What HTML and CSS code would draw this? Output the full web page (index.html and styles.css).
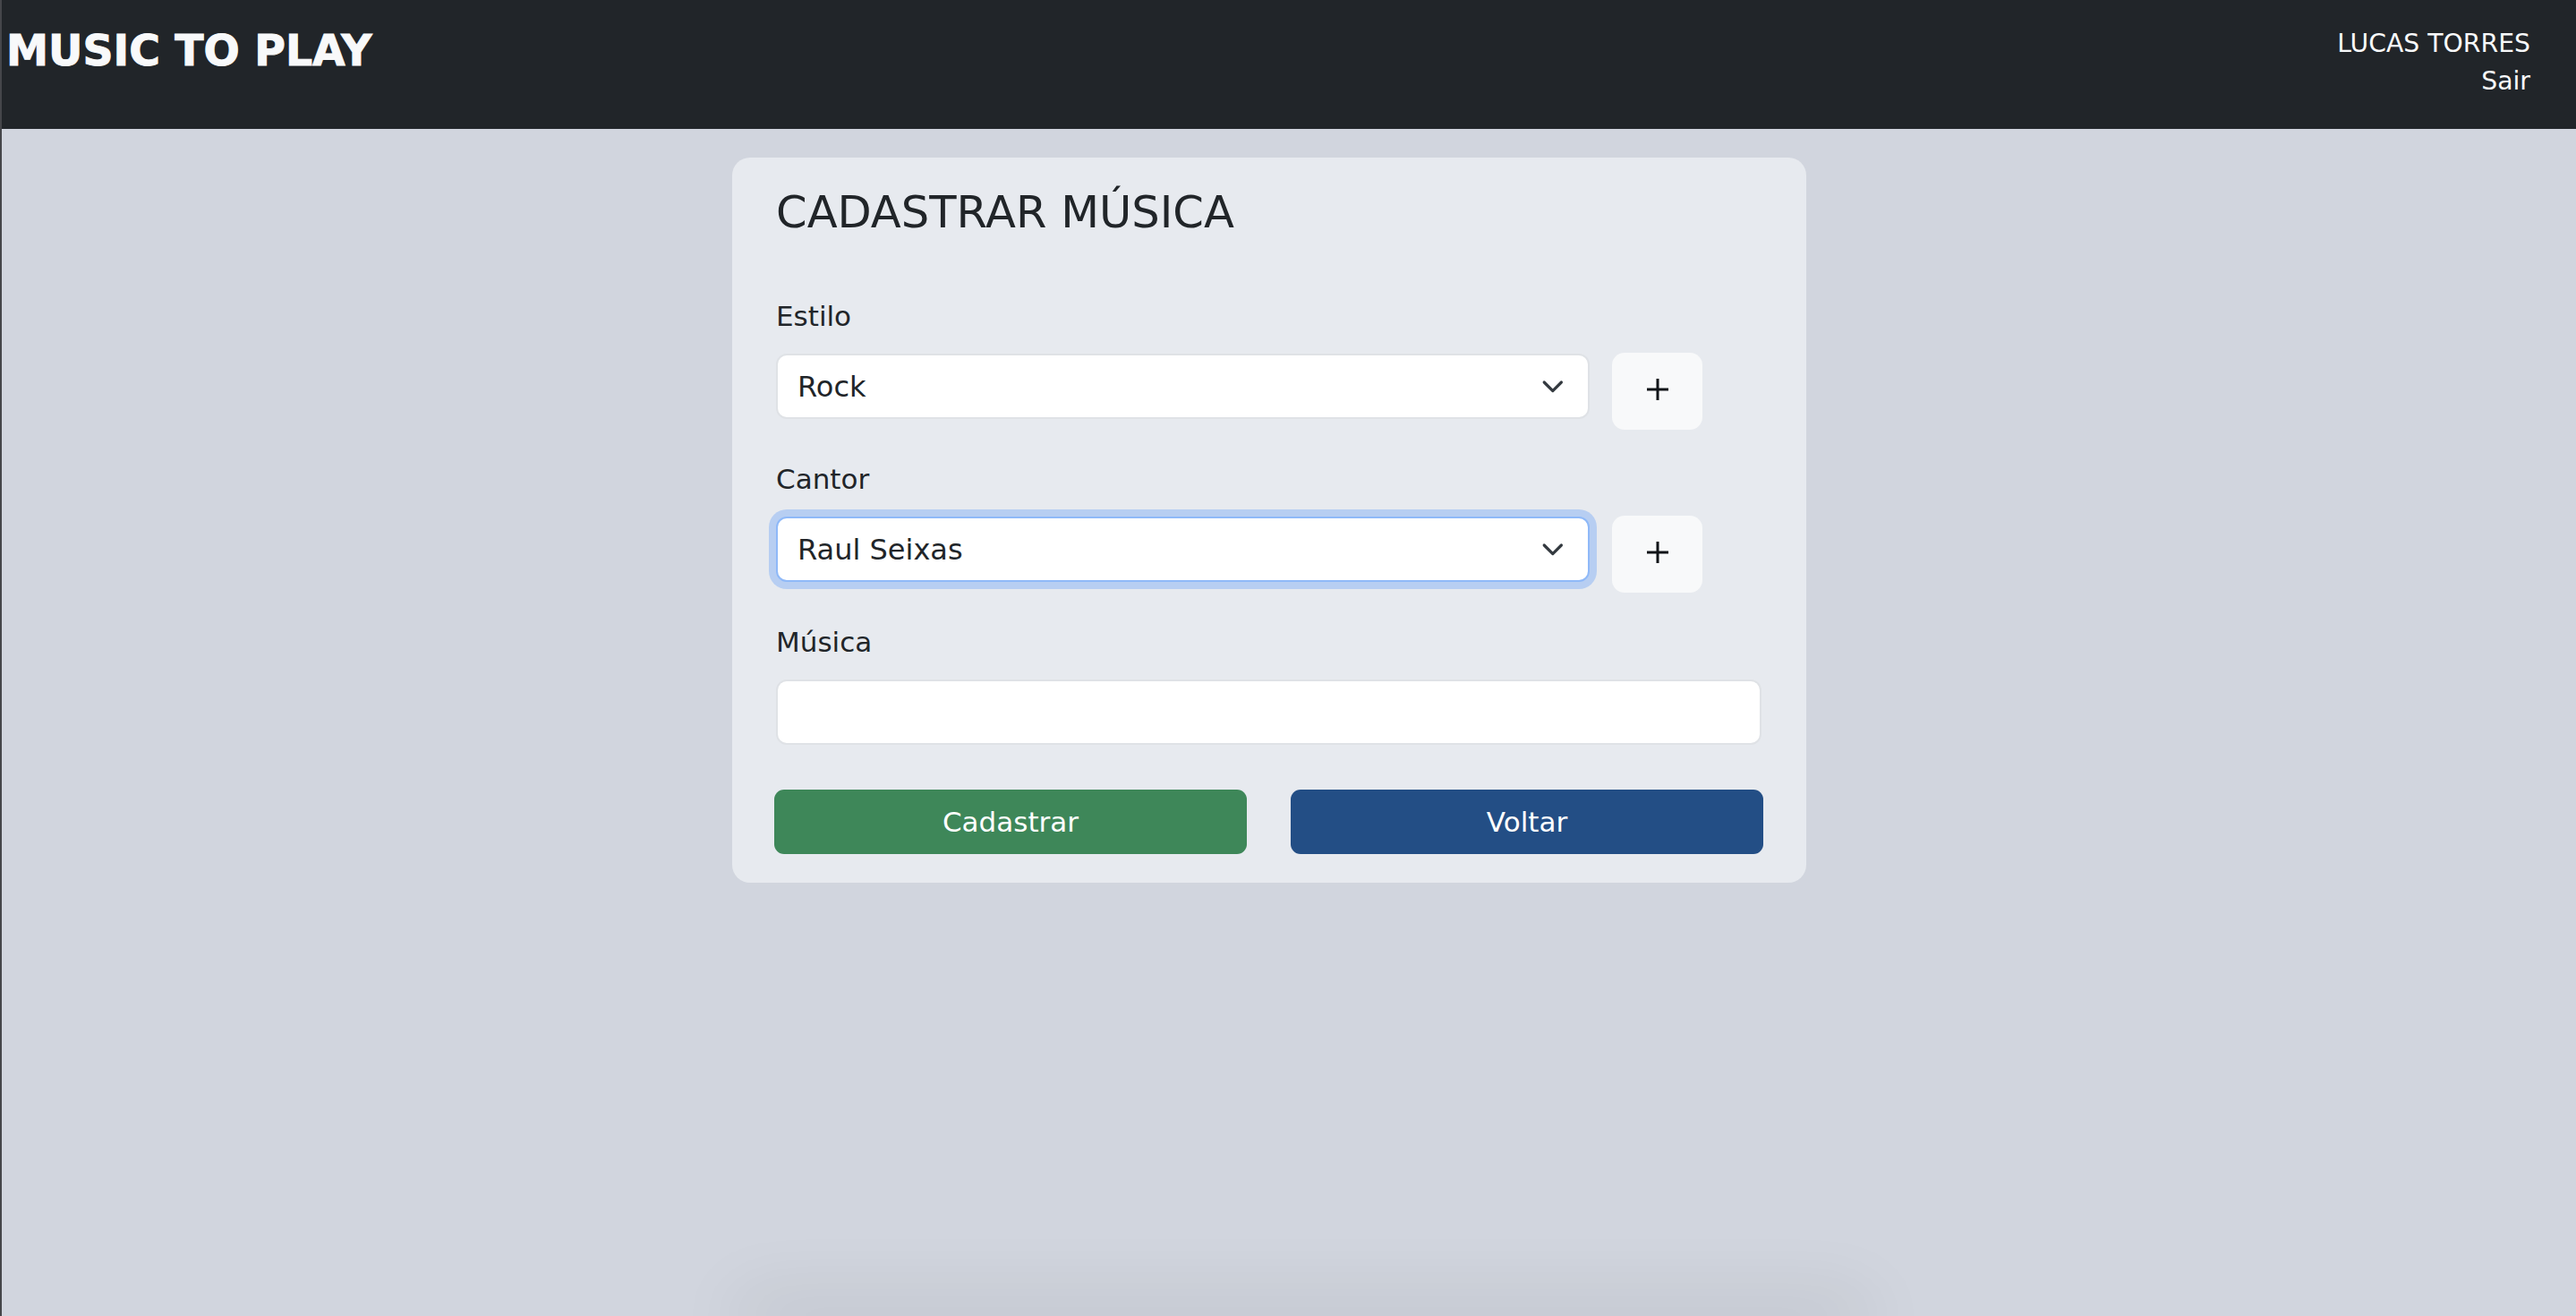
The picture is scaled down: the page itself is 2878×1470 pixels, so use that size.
FILE: index.html
```html
<!DOCTYPE html>
<html lang="pt-BR">
<head>
<meta charset="utf-8">
<title>Music to Play - Cadastrar Música</title>
<link rel="stylesheet" href="styles.css">
</head>
<body>
<header class="topbar">
  <a class="brand" href="#">MUSIC TO PLAY</a>
  <div class="user">
    <span class="user-name">LUCAS TORRES</span>
    <a class="logout" href="#">Sair</a>
  </div>
</header>
<main class="page">
  <section class="card">
    <h1 class="card-title">CADASTRAR MÚSICA</h1>
    <form class="form">
      <div class="field">
        <label class="label" for="estilo">Estilo</label>
        <div class="select-row">
          <div class="select-wrap">
            <select id="estilo" class="select">
              <option>Rock</option>
            </select>
            <svg class="chevron" viewBox="0 0 16 16" aria-hidden="true"><path d="M2 5l6 6 6-6" fill="none" stroke="currentColor" stroke-width="2" stroke-linecap="round" stroke-linejoin="round"/></svg>
          </div>
          <button type="button" class="add-btn" aria-label="Adicionar estilo">
            <svg class="plus" viewBox="0 0 24 24" aria-hidden="true"><path d="M0 12h24M12 0v24" fill="none" stroke="currentColor" stroke-width="3"/></svg>
          </button>
        </div>
      </div>
      <div class="field">
        <label class="label" for="cantor">Cantor</label>
        <div class="select-row">
          <div class="select-wrap">
            <select id="cantor" class="select is-focused">
              <option>Raul Seixas</option>
            </select>
            <svg class="chevron" viewBox="0 0 16 16" aria-hidden="true"><path d="M2 5l6 6 6-6" fill="none" stroke="currentColor" stroke-width="2" stroke-linecap="round" stroke-linejoin="round"/></svg>
          </div>
          <button type="button" class="add-btn" aria-label="Adicionar cantor">
            <svg class="plus" viewBox="0 0 24 24" aria-hidden="true"><path d="M0 12h24M12 0v24" fill="none" stroke="currentColor" stroke-width="3"/></svg>
          </button>
        </div>
      </div>
      <div class="field">
        <label class="label" for="musica">Música</label>
        <input id="musica" class="input" type="text">
      </div>
      <div class="actions">
        <button type="submit" class="btn btn-green">Cadastrar</button>
        <button type="button" class="btn btn-blue">Voltar</button>
      </div>
    </form>
  </section>
  <div class="below"></div>
</main>
</body>
</html>
```
FILE: styles.css
```css
* { box-sizing: border-box; }

html, body { margin: 0; padding: 0; }

body {
  background: #d1d5de;
  font-family: "DejaVu Sans", "Noto Sans", sans-serif;
  color: #212529;
  border-left: 2px solid #45464a;
  height: 100vh;
  overflow: hidden;
  display: flex;
  flex-direction: column;
}

.topbar {
  flex: none;
  height: 144px;
  background: #212529;
  display: flex;
  justify-content: space-between;
  align-items: flex-start;
  padding: 28px 51px 0 5px;
}

.brand {
  color: #f8f9fa;
  text-decoration: none;
  font-weight: 700;
  font-size: 47.3px;
  line-height: 54px;
  margin-top: 2px;
  -webkit-text-stroke: 1px #f8f9fa;
}

.user {
  display: flex;
  flex-direction: column;
  align-items: flex-end;
  color: #f8f9fa;
  font-size: 28.3px;
  line-height: 42px;
}

.logout {
  color: #f8f9fa;
  text-decoration: none;
}

.page {
  flex: 1;
  display: flex;
  flex-direction: column;
  padding: 32px 44px 0 0;
}

.card {
  width: 1200px;
  margin: 0 auto;
  background: #e7eaef;
  border-radius: 20px;
  padding: 31px 50px 32px 49px;
}

.card-title {
  margin: 0 0 68px;
  font-weight: 400;
  font-size: 49.6px;
  line-height: 60px;
  color: #212529;
}

.form { margin: 0; }

.field { margin-bottom: 37px; }

.field:nth-child(3) { margin-bottom: 50px; }

.label {
  display: block;
  font-size: 31px;
  line-height: 36px;
  margin-bottom: 24px;
  color: #212529;
}

.select-row {
  display: flex;
  align-items: flex-start;
  gap: 25px;
}

.select-wrap {
  position: relative;
  width: 909px;
}

.select {
  appearance: none;
  -webkit-appearance: none;
  display: block;
  width: 100%;
  height: 73px;
  border: 2px solid #dfe2e6;
  border-radius: 12px;
  background: #ffffff;
  font-family: inherit;
  font-size: 32px;
  color: #212529;
  padding: 0 70px 0 22px;
  outline: none;
}

.select.is-focused {
  border-color: #8fb9f8;
  box-shadow: 0 0 0 8px rgba(13, 110, 253, 0.22);
}

.chevron {
  position: absolute;
  right: 28px;
  top: 50%;
  width: 25.6px;
  height: 25.6px;
  margin-top: -13px;
  color: #343a40;
  pointer-events: none;
}

.add-btn {
  width: 101px;
  height: 86px;
  margin-top: -1px;
  border: none;
  border-radius: 14px;
  background: #f8f9fa;
  color: #111418;
  display: flex;
  align-items: center;
  justify-content: center;
  padding: 0 0 4px;
  cursor: pointer;
}

.plus {
  width: 24px;
  height: 24px;
  display: block;
}

.input {
  display: block;
  width: 100%;
  height: 73px;
  border: 2px solid #dfe2e6;
  border-radius: 12px;
  background: #ffffff;
  font-family: inherit;
  font-size: 32px;
  padding: 0 21px;
  outline: none;
}

.actions {
  display: grid;
  grid-template-columns: 1fr 1fr;
  gap: 49px;
  margin: 0 -2px;
}

.btn {
  height: 72px;
  border: none;
  border-radius: 11px;
  font-family: inherit;
  font-size: 31px;
  color: #ffffff;
  cursor: pointer;
}

.btn-green { background: #3e8759; }

.btn-blue { background: #234e85; }

.below {
  flex: none;
  width: 1240px;
  height: 0;
  margin: auto 0 0 834px;
  box-shadow: 0 0 80px 10px rgba(0, 0, 0, 0.2);
}
```
